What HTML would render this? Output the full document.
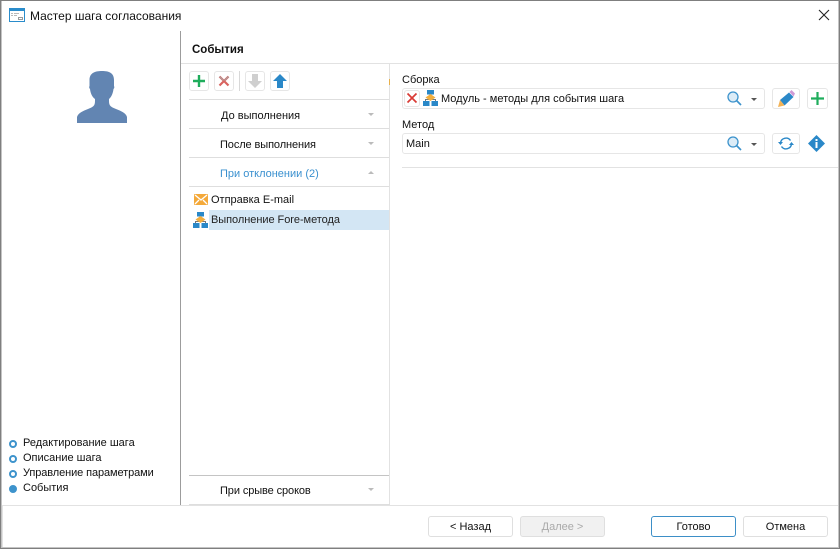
<!DOCTYPE html>
<html><head><meta charset="utf-8"><style>
html,body{margin:0;padding:0;background:#fff}
#p{position:relative;width:840px;height:549px;overflow:hidden;background:#fff;font-family:"Liberation Sans",sans-serif;font-size:11px;color:#111}
#p div,#p svg{position:absolute}
.t{white-space:nowrap;line-height:16px}
.h{height:1px;background:#dedede}
.b{border:1px solid #e6e6e6;border-radius:3px;box-sizing:border-box;background:#fff}
.bt{border:1px solid #dfdfdf;border-radius:3px;box-sizing:border-box;background:#fff;height:21px;top:516px;text-align:center;line-height:21px;font-size:11px}
.arr{width:0;height:0;border-left:3px solid transparent;border-right:3px solid transparent;border-top:3px solid #bbb}
.dot{width:4px;height:4px;border:2px solid #3d93cc;border-radius:50%;left:9px;background:#fff}
</style></head><body><div id="p">
<div style="left:0;top:0;width:840px;height:549px;box-sizing:border-box;border:1px solid #7f7f7f;box-shadow:inset 1px 0 #c4c4c4,inset -1px 0 #c4c4c4,inset 0 -1px #c4c4c4"></div>
<svg style="left:9px;top:8px" width="17" height="14"><rect x=".5" y=".5" width="15" height="13" fill="#fff" stroke="#2a8ccb"/><rect x="0" y="0" width="16" height="3" fill="#2a8ccb"/><path d="M2 5.500h2M5 5.500h5M2 7.500h2M5 7.500h3" stroke="#b9b9b9"/><rect x="9.500" y="9.500" width="4" height="2" fill="none" stroke="#9a9a9a"/></svg>
<div class="t" style="left:30px;top:9px;font-size:12px;line-height:14px">Мастер шага согласования</div>
<svg style="left:818px;top:9px" width="12" height="12"><path d="M1 1l10 10M11 1L1 11" stroke="#222" stroke-width="1.100" fill="none"/></svg>

<div style="left:180px;top:31px;width:1px;height:474px;background:#9c9c9c"></div>
<div class="t" style="left:192px;top:42px;font-weight:bold;font-size:11.500px">События</div>
<div class="h" style="left:181px;top:63px;width:657px;background:#e2e2e2"></div>

<svg style="left:77px;top:70px" width="50" height="54"><path d="M0 53V47C1 43 6 41 11 39C16 37 18 36 18 31V29C15 27 13.500 23 13 19C12 18 12 17 12.500 16V10C12.500 3 18 1 25 1C32 1 37 3 37 10V16C37.500 17 37.500 18 36.500 19C36 23 34.500 27 32 29V31C32 36 34 37 39 39C44 41 49 43 50 47V53Z" fill="#6285b2"/></svg>

<!-- Toolbar -->
<div class="b" style="left:189px;top:71px;width:20px;height:20px"></div>
<svg style="left:192px;top:74px" width="14" height="14"><path d="M7 1v12M1 7h12" stroke="#1fad5c" stroke-width="2.400"/></svg>
<div class="b" style="left:214px;top:71px;width:20px;height:20px"></div>
<svg style="left:218px;top:75px" width="12" height="12"><path d="M1.500 1.500l9 9M10.500 1.500l-9 9" stroke="#d9635f" stroke-width="2.200"/><path d="M1.500 1.500l4 4M10.500 1.500l-4 4" stroke="#a5a5a5" stroke-width="1"/></svg>
<div style="left:239px;top:71px;width:1px;height:20px;background:#d8d8d8"></div>
<div class="b" style="left:245px;top:71px;width:20px;height:20px"></div>
<svg style="left:248px;top:73px" width="14" height="16"><path d="M4 1h6v7h4l-7 7-7-7h4z" fill="#cfcfcf"/></svg>
<div class="b" style="left:270px;top:71px;width:20px;height:20px"></div>
<svg style="left:273px;top:73px" width="14" height="16"><path d="M4 15h6V8h4L7 1 0 8h4z" fill="#2a88c8"/></svg>

<div style="left:389px;top:64px;width:1px;height:440px;background:#e2e2e2"></div>
<div style="left:389px;top:79px;width:1px;height:6px;background:#e8b04a"></div>

<!-- Accordion -->
<div class="h" style="left:189px;top:99px;width:200px"></div>
<div class="t" style="left:221px;top:108px">До выполнения</div>
<div class="arr" style="left:368px;top:113px"></div>
<div class="h" style="left:189px;top:128px;width:200px"></div>
<div class="t" style="left:220px;top:137px;letter-spacing:-.1px">После выполнения</div>
<div class="arr" style="left:368px;top:142px"></div>
<div class="h" style="left:189px;top:157px;width:200px"></div>
<div class="t" style="left:220px;top:166px;color:#3a90cf">При отклонении (2)</div>
<div class="arr" style="left:368px;top:171px;border-top:0;border-bottom:3px solid #bbb"></div>
<div class="h" style="left:189px;top:186px;width:200px"></div>

<svg style="left:194px;top:194px" width="14" height="11"><rect width="14" height="11" rx="1" fill="#f4a93a"/><path d="M1 1l6 5 6-5M1 10l4-4M13 10L9 6" stroke="#fff" stroke-width="1.300" fill="none"/></svg>
<div class="t" style="left:211px;top:192px">Отправка E-mail</div>
<div style="left:209px;top:210px;width:180px;height:20px;background:#d3e6f4"></div>
<svg style="left:193px;top:212px" width="15" height="16"><path d="M2.500 12V9.500H12.500V12" stroke="#777" fill="none"/><rect x="4" y="0" width="7" height="4.500" fill="#2a88c8"/><path d="M7.500 4l5 3.500-5 3.500-5-3.500z" fill="#f2ae3e"/><rect x="0" y="11" width="6.500" height="5" fill="#2a88c8"/><rect x="8.500" y="11" width="6.500" height="5" fill="#2a88c8"/></svg>
<div class="t" style="left:211px;top:212px;color:#222;letter-spacing:-.05px">Выполнение Fore-метода</div>

<div class="h" style="left:189px;top:475px;width:200px;background:#c4c4c4"></div>
<div class="t" style="left:220px;top:483px;letter-spacing:-.1px">При срыве сроков</div>
<div class="arr" style="left:368px;top:488px"></div>
<div class="h" style="left:189px;top:504px;width:201px"></div>

<!-- Right form -->
<div class="t" style="left:402px;top:72px">Сборка</div>
<div class="b" style="left:402px;top:88px;width:363px;height:21px"></div>
<div class="b" style="left:404px;top:90px;width:16px;height:17px"></div>
<svg style="left:406px;top:92px" width="12" height="12"><path d="M1.500 1.500l9 9M10.500 1.500l-9 9" stroke="#d93a34" stroke-width="1.700"/></svg>
<svg style="left:423px;top:90px" width="15" height="16"><path d="M2.500 12V9.500H12.500V12" stroke="#777" fill="none"/><rect x="4" y="0" width="7" height="4.500" fill="#2a88c8"/><path d="M7.500 4l5 3.500-5 3.500-5-3.500z" fill="#f2ae3e"/><rect x="0" y="11" width="6.500" height="5" fill="#2a88c8"/><rect x="8.500" y="11" width="6.500" height="5" fill="#2a88c8"/></svg>
<div class="t" style="left:441px;top:91px">Модуль - методы для события шага</div>
<svg style="left:727px;top:91px" width="15" height="16"><circle cx="6" cy="6" r="5" fill="#dcecf7" stroke="#3d93cc" stroke-width="1.300"/><path d="M9.500 9.500l4.500 4.500" stroke="#3d93cc" stroke-width="1.700"/></svg>
<div class="arr" style="left:751px;top:98px;border-top-color:#555"></div>

<div class="b" style="left:772px;top:88px;width:28px;height:21px"></div>
<svg style="left:777px;top:89px" width="18" height="19"><path d="M3 11L12 3.500L16.500 8L7.500 16.500Z" fill="#2a88c8"/><path d="M12.500 3L14.500 1L18 4.500L16.500 7.500Z" fill="#cf9ad6"/><path d="M3 11L1 18L7.500 16.500Z" fill="#f2b255"/></svg>
<div class="b" style="left:807px;top:88px;width:21px;height:21px"></div>
<svg style="left:811px;top:92px" width="13" height="13"><path d="M6.500 0v13M0 6.500h13" stroke="#1fad5c" stroke-width="2.200"/></svg>

<div class="t" style="left:402px;top:117px">Метод</div>
<div class="b" style="left:402px;top:133px;width:363px;height:21px"></div>
<div class="t" style="left:406px;top:136px">Main</div>
<svg style="left:727px;top:136px" width="15" height="16"><circle cx="6" cy="6" r="5" fill="#dcecf7" stroke="#3d93cc" stroke-width="1.300"/><path d="M9.500 9.500l4.500 4.500" stroke="#3d93cc" stroke-width="1.700"/></svg>
<div class="arr" style="left:751px;top:143px;border-top-color:#555"></div>
<div class="b" style="left:772px;top:133px;width:28px;height:21px"></div>
<svg style="left:778px;top:136px" width="16" height="15"><path d="M2.500 7A5.500 5.500 0 0 1 12.500 4.500M13.500 8A5.500 5.500 0 0 1 3.500 10.500" fill="none" stroke="#2a88c8" stroke-width="1.400"/><path d="M0 6h5L2.500 9zM11 9h5l-2.500-3z" fill="#2a88c8"/></svg>
<svg style="left:808px;top:135px" width="17" height="17"><path d="M8.500 0L17 8.500 8.500 17 0 8.500z" fill="#2a88c8"/><rect x="7.500" y="4" width="2" height="2" fill="#fff"/><rect x="7.500" y="7" width="2" height="6" fill="#fff"/></svg>
<div class="h" style="left:402px;top:167px;width:436px;background:#e2e2e2"></div>

<!-- Steps -->
<div class="dot" style="top:440px"></div>
<div class="t" style="left:23px;top:435px">Редактирование шага</div>
<div class="dot" style="top:455px"></div>
<div class="t" style="left:23px;top:450px">Описание шага</div>
<div class="dot" style="top:470px"></div>
<div class="t" style="left:23px;top:465px;letter-spacing:-.1px">Управление параметрами</div>
<div class="dot" style="top:485px;background:#3d93cc"></div>
<div class="t" style="left:23px;top:480px">События</div>

<!-- Footer -->
<div style="left:2px;top:505px;width:836px;height:42px;box-sizing:border-box;border:1px solid #e2e2e2;border-bottom:0;border-right:0;background:#fff"></div>
<div class="bt" style="left:428px;width:85px">&lt; Назад</div>
<div class="bt" style="left:520px;width:85px;background:#f1f1f1;color:#aaa">Далее &gt;</div>
<div class="bt" style="left:651px;width:85px;border-color:#3d8fc7">Готово</div>
<div class="bt" style="left:743px;width:85px">Отмена</div>
</div></body></html>
